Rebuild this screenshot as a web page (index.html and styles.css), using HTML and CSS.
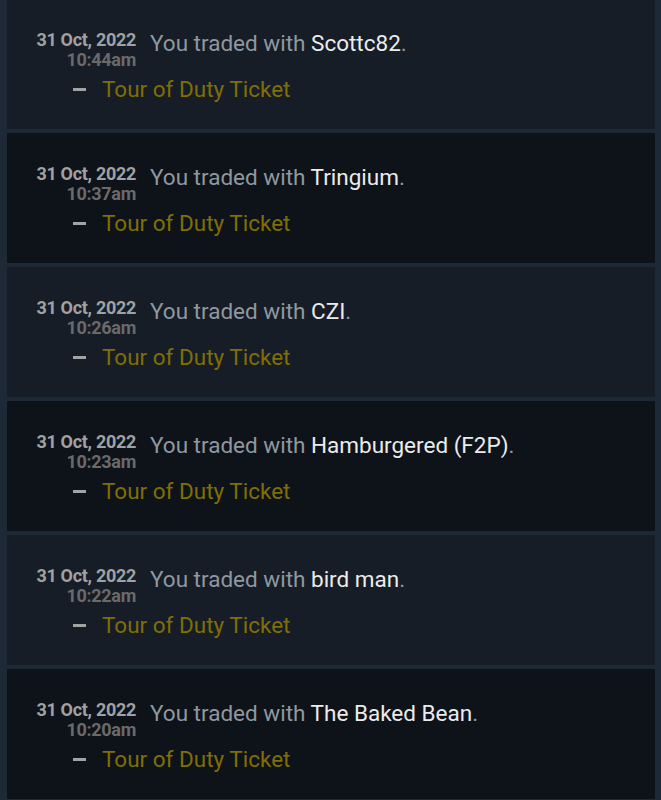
FILE: index.html
```html
<!DOCTYPE html>
<html lang="en">
<head>
  <meta charset="UTF-8" />
  <meta name="viewport" content="width=device-width, initial-scale=1.0"/>
  <title>Trade History</title>
  <link rel="stylesheet" href="styles.css">
</head>
<body>
  <main class="history">
    <div class="trade-row">
      <div class="trade-head">
        <div class="trade-date">31 Oct, 2022<div class="trade-time">10:44am</div></div>
        <div class="trade-desc">You traded with <span class="partner">Scottc82</span>.</div>
      </div>
      <div class="trade-item"><span class="item-dash"></span>Tour of Duty Ticket</div>
    </div>

    <div class="trade-row">
      <div class="trade-head">
        <div class="trade-date">31 Oct, 2022<div class="trade-time">10:37am</div></div>
        <div class="trade-desc">You traded with <span class="partner">Tringium</span>.</div>
      </div>
      <div class="trade-item"><span class="item-dash"></span>Tour of Duty Ticket</div>
    </div>

    <div class="trade-row">
      <div class="trade-head">
        <div class="trade-date">31 Oct, 2022<div class="trade-time">10:26am</div></div>
        <div class="trade-desc">You traded with <span class="partner">CZI</span>.</div>
      </div>
      <div class="trade-item"><span class="item-dash"></span>Tour of Duty Ticket</div>
    </div>

    <div class="trade-row">
      <div class="trade-head">
        <div class="trade-date">31 Oct, 2022<div class="trade-time">10:23am</div></div>
        <div class="trade-desc">You traded with <span class="partner">Hamburgered (F2P)</span>.</div>
      </div>
      <div class="trade-item"><span class="item-dash"></span>Tour of Duty Ticket</div>
    </div>

    <div class="trade-row">
      <div class="trade-head">
        <div class="trade-date">31 Oct, 2022<div class="trade-time">10:22am</div></div>
        <div class="trade-desc">You traded with <span class="partner">bird man</span>.</div>
      </div>
      <div class="trade-item"><span class="item-dash"></span>Tour of Duty Ticket</div>
    </div>

    <div class="trade-row">
      <div class="trade-head">
        <div class="trade-date">31 Oct, 2022<div class="trade-time">10:20am</div></div>
        <div class="trade-desc">You traded with <span class="partner">The Baked Bean</span>.</div>
      </div>
      <div class="trade-item"><span class="item-dash"></span>Tour of Duty Ticket</div>
    </div>
  </main>
</body>
</html>
```

FILE: styles.css
```css
body {
  margin: 0;
  font-family: Roboto, 'Liberation Sans', sans-serif;
  background: #1e2937;
  color: #8f98a0;
  overflow: hidden;
}

.history {
  display: flex;
  flex-direction: column;
  gap: 4px;
  margin-top: -1px;
  padding: 0 6px 0 7px;
}

.trade-row {
  height: 130px;
  box-sizing: border-box;
  padding-top: 31px;
  background-color: #161d27;
}

.trade-row:nth-child(even) {
  background-color: #0e131a;
}

.trade-head {
  display: flex;
  gap: 14px;
}

.trade-date {
  width: 129px;
  text-align: right;
  font-size: 18px;
  line-height: 20px;
  font-weight: bold;
  letter-spacing: -0.3px;
  color: #a1a1a1;
}

.trade-time {
  color: #6a6a6a;
}

.trade-desc {
  font-size: 22.5px;
  line-height: 26px;
}

.partner {
  color: #ebebeb;
}

.trade-item {
  display: flex;
  align-items: center;
  margin-top: 6px;
  padding-left: 66px;
  font-size: 22.5px;
  line-height: 26px;
  color: #7f6f04;
}

.item-dash {
  width: 13px;
  height: 3px;
  margin-right: 16px;
  background-color: #a3a3a3;
}
```
